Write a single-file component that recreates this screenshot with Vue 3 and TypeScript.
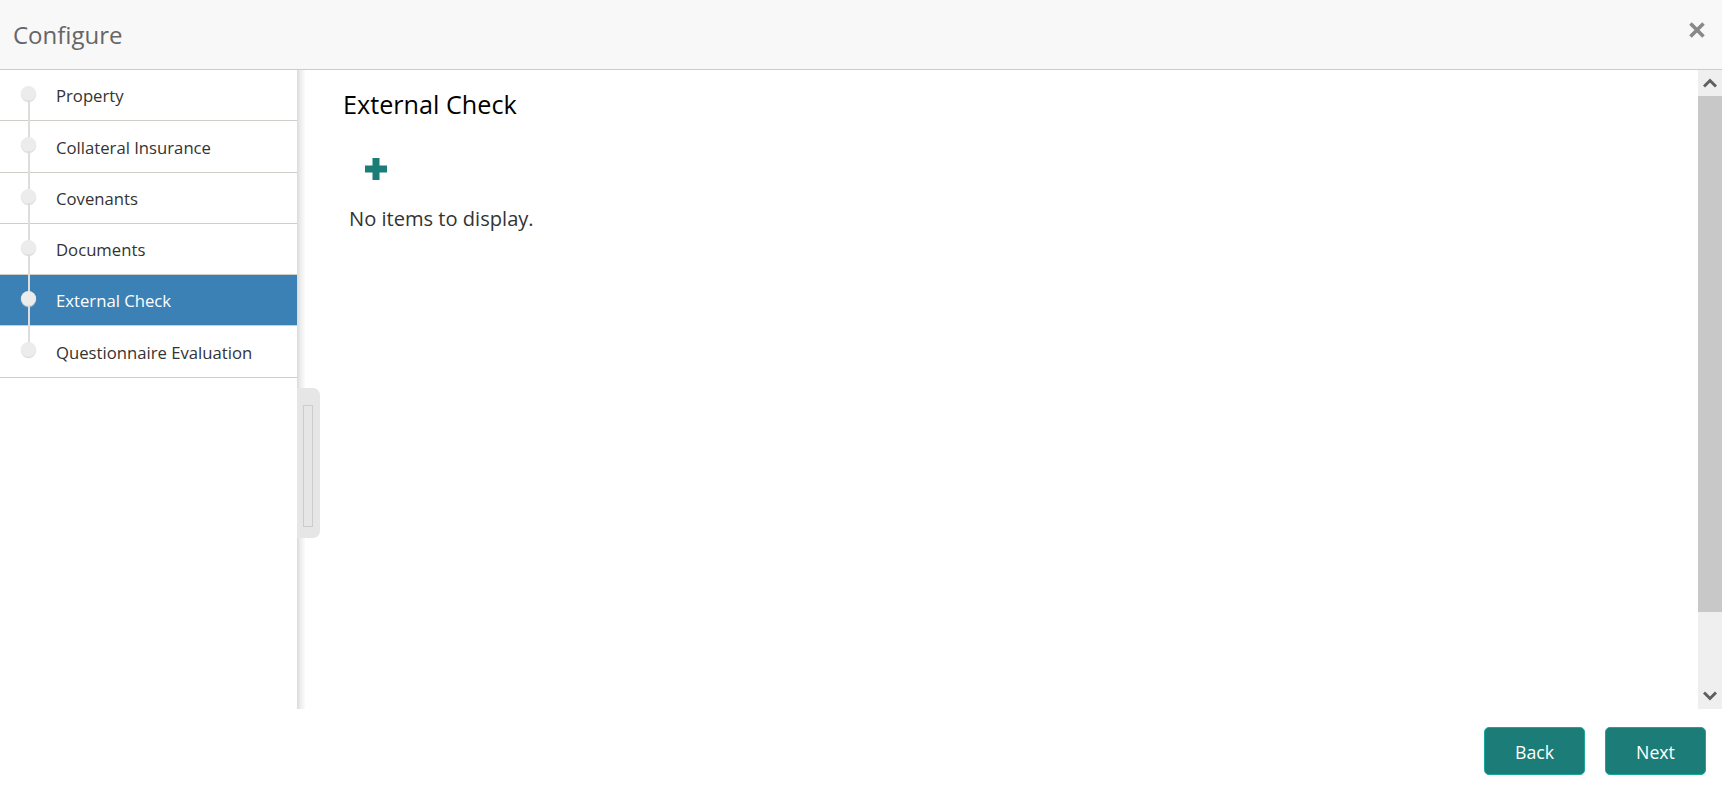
<script setup lang="ts">
interface Step {
  label: string
  active?: boolean
}

const steps: Step[] = [
  { label: 'Property' },
  { label: 'Collateral Insurance' },
  { label: 'Covenants' },
  { label: 'Documents' },
  { label: 'External Check', active: true },
  { label: 'Questionnaire Evaluation' },
]
</script>

<template>
  <div class="dialog">
    <header class="dialog-header">
      <h1>Configure</h1>
      <button class="close" aria-label="Close">
        <svg viewBox="0 0 16 16" width="16" height="16">
          <path d="M1.5 1.5 L14.5 14.5 M14.5 1.5 L1.5 14.5" />
        </svg>
      </button>
    </header>

    <div class="dialog-body">
      <nav class="train">
        <ul>
          <li v-for="(step, i) in steps" :key="step.label" :class="{ active: step.active }">
            <span class="dot" :class="{ last: i === steps.length - 1 }"></span>
            <span class="label">{{ step.label }}</span>
          </li>
        </ul>
        <div class="handle"><span></span></div>
      </nav>

      <main class="content">
        <h2>External Check</h2>
        <button class="add" aria-label="Add">
          <svg viewBox="0 0 22 22" width="22" height="22">
            <path d="M7.5 0 H14.5 V7.5 H22 V14.5 H14.5 V22 H7.5 V14.5 H0 V7.5 H7.5 Z" />
          </svg>
        </button>
        <p>No items to display.</p>
      </main>

      <div class="scrollbar">
        <div class="arrow">
          <svg viewBox="0 0 14 10" width="14" height="10"><path d="M1 8.5 L7 2.5 L13 8.5" /></svg>
        </div>
        <div class="track"><div class="thumb"></div></div>
        <div class="arrow">
          <svg viewBox="0 0 14 10" width="14" height="10"><path d="M1 1.5 L7 7.5 L13 1.5" /></svg>
        </div>
      </div>
    </div>

    <footer class="dialog-footer">
      <button class="btn">Back</button>
      <button class="btn">Next</button>
    </footer>
  </div>
</template>

<style>
html,
body {
  margin: 0;
  background: #fff;
}
</style>

<style scoped>
.dialog {
  width: 1722px;
  height: 797px;
  display: flex;
  flex-direction: column;
  font-family: "Open Sans", "Noto Sans", sans-serif;
  overflow: hidden;
}

.dialog-header {
  height: 69px;
  flex-shrink: 0;
  display: flex;
  align-items: center;
  justify-content: space-between;
  padding: 0 17px 0 13px;
  background: #f8f8f8;
  border-bottom: 1px solid #ccc;
}

.dialog-header h1 {
  margin: 0;
  font-size: 24px;
  font-weight: 400;
  color: #666;
}

.close {
  border: 0;
  padding: 0;
  background: none;
  display: flex;
  margin-bottom: 9px;
}

.close path {
  fill: none;
  stroke: #888;
  stroke-width: 3.6;
}

.dialog-body {
  height: 639px;
  flex-shrink: 0;
  display: flex;
}

.train {
  position: relative;
  width: 297px;
  flex-shrink: 0;
}

.train::after {
  content: "";
  position: absolute;
  top: 0;
  bottom: 0;
  left: 297px;
  width: 8px;
  background: linear-gradient(to right, #dadada, #ececec 40%, #fbfbfb);
}

.train ul {
  margin: 0;
  padding: 0;
  list-style: none;
}

.train li {
  height: 50.3px;
  border-bottom: 1px solid #cfcfca;
  display: flex;
  align-items: center;
  padding-left: 56px;
  position: relative;
  font-size: 16.7px;
  color: #333;
}

.train li.active {
  background: #3c81b5;
  color: #fff;
}

.label {
  line-height: 1;
  margin-top: 3px;
}

.dot {
  position: absolute;
  left: 21px;
  top: 16px;
  width: 15px;
  height: 15px;
  border-radius: 50%;
  background: #ececec;
  box-shadow: 0 1px 1px #d4d4d4;
  z-index: 1;
}

.dot::after {
  content: "";
  position: absolute;
  left: 6.5px;
  top: 14px;
  width: 2px;
  height: 38px;
  background: #ddd;
}

.dot.last::after {
  display: none;
}

.handle {
  position: absolute;
  left: 297px;
  top: 318px;
  width: 23px;
  height: 150px;
  box-sizing: border-box;
  background: #e6e6e6;
  border-radius: 0 7px 7px 0;
  padding: 17px 0 0 6px;
  z-index: 1;
}

.handle span {
  display: block;
  width: 8px;
  height: 120px;
  border: 1px solid #ccc;
}

.content {
  flex: 1;
  padding-left: 46px;
  min-width: 0;
}

.content h2 {
  margin: 16px 0 0;
  font-size: 25.2px;
  line-height: 36px;
  font-weight: 400;
  color: #000;
}

.add {
  display: block;
  border: 0;
  padding: 0;
  background: none;
  margin: 36px 0 0 22px;
  height: 22px;
}

.add path {
  fill: #1c7d78;
}

.content p {
  margin: 25px 0 0 6px;
  font-size: 20.1px;
  line-height: 28px;
  color: #333;
}

.scrollbar {
  width: 24px;
  flex-shrink: 0;
  display: flex;
  flex-direction: column;
  background: #efefef;
}

.arrow {
  height: 26px;
  flex-shrink: 0;
  display: flex;
  align-items: center;
  justify-content: center;
}

.arrow path {
  fill: none;
  stroke: #5f5f5f;
  stroke-width: 3;
}

.track {
  flex: 1;
}

.thumb {
  height: 516px;
  background: #c8c8c8;
}

.dialog-footer {
  flex: 1;
  display: flex;
  justify-content: flex-end;
  align-items: flex-start;
  gap: 20px;
  padding: 18px 16px 0 0;
}

.btn {
  width: 101px;
  height: 48px;
  box-sizing: border-box;
  background: #1c7d78;
  border: 1px solid #19a79b;
  border-radius: 5px;
  color: #fff;
  font: inherit;
  font-size: 17.7px;
  padding-top: 2px;
}
</style>
